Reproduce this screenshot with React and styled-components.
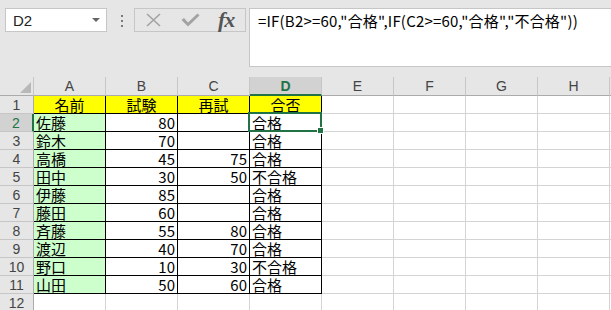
import React from "react";
import styled, { createGlobalStyle, css } from "styled-components";

const GlobalStyle = createGlobalStyle`
  html, body {
    margin: 0;
    padding: 0;
    background: #e6e6e6;
  }
  body {
    font-family: "Noto Sans CJK JP", "Liberation Sans", sans-serif;
  }
`;

const GREEN = "#217346";
const GRID = "#d4d4d4";

const Page = styled.div`
  width: 611px;
  height: 310px;
  overflow: hidden;
  background: #e6e6e6;
`;

const FormulaRow = styled.div`
  display: flex;
  align-items: flex-start;
  height: 77px;
  box-sizing: border-box;
  padding: 8px 0 0 5px;
`;

const NameBox = styled.div`
  width: 102px;
  height: 24px;
  box-sizing: border-box;
  border: 1px solid #c6c6c6;
  background: #fff;
  display: flex;
  align-items: center;
  justify-content: space-between;
  padding: 0 6px 0 7px;
  font: 15px "Liberation Sans", sans-serif;
  color: #222;
`;

const DropArrow = styled.span`
  width: 0;
  height: 0;
  border-left: 4px solid transparent;
  border-right: 4px solid transparent;
  border-top: 4px solid #666;
`;

const Grip = styled.div`
  display: flex;
  flex-direction: column;
  gap: 3px;
  margin: 7px 11px 0 14px;
  span {
    width: 2px;
    height: 2px;
    background: #7a7a7a;
  }
`;

const ButtonBox = styled.div`
  width: 112px;
  height: 24px;
  box-sizing: border-box;
  border: 1px solid #c6c6c6;
  display: flex;
  align-items: center;
  padding-left: 11px;
`;

const IconSlot = styled.span`
  display: flex;
  align-items: center;
  margin-right: ${(p) => p.gap || 0}px;
`;

const Fx = styled.span`
  font: italic bold 22px "Liberation Serif", serif;
  color: #555;
  letter-spacing: -1px;
  line-height: 22px;
  margin-top: -1px;
`;

const FormulaBox = styled.div`
  flex: 1;
  margin-left: 3px;
  height: 59px;
  box-sizing: border-box;
  border: 1px solid #c6c6c6;
  border-right: none;
  background: #fff;
  padding: 2px 0 0 8px;
  font-size: 15px;
  line-height: 20px;
  letter-spacing: 0.2px;
  color: #000;
  white-space: nowrap;
`;

const Sheet = styled.div`
  display: grid;
  grid-template-columns: 34px repeat(8, 72px) 40px;
  grid-template-rows: 19px repeat(12, 18px);
`;

const HeadBase = css`
  box-sizing: border-box;
  background: #e6e6e6;
  display: flex;
  align-items: center;
  justify-content: center;
  font: 14px "Liberation Sans", sans-serif;
  color: #444;
`;

const Corner = styled.div`
  ${HeadBase};
  border-right: 1px solid #c6c6c6;
  border-bottom: 1px solid #ababab;
  justify-content: flex-end;
  align-items: flex-end;
  padding: 0 2px 2px 0;
`;

const ColHead = styled.div`
  ${HeadBase};
  border-right: 1px solid #c6c6c6;
  border-bottom: 1px solid #ababab;
  ${(p) =>
    p.active &&
    css`
      background: #d2d2d2;
      color: ${GREEN};
      font-weight: bold;
      border-bottom: 2px solid ${GREEN};
    `}
`;

const RowHead = styled.div`
  ${HeadBase};
  border-right: 1px solid #ababab;
  border-bottom: 1px solid #c6c6c6;
  ${(p) =>
    p.active &&
    css`
      background: #d2d2d2;
      color: ${GREEN};
      border-right: 2px solid ${GREEN};
    `}
`;

const Cell = styled.div`
  position: relative;
  box-sizing: border-box;
  border-right: 1px solid ${(p) => (p.boxed ? "#000" : GRID)};
  border-bottom: 1px solid ${(p) => (p.boxed ? "#000" : GRID)};
  background: ${(p) => p.fill || "#fff"};
  display: flex;
  align-items: flex-end;
  justify-content: ${(p) =>
    p.align === "right" ? "flex-end" : p.align === "center" ? "center" : "flex-start"};
  padding: 0 2px;
  font-size: 15px;
  line-height: 17px;
  color: #000;
  white-space: nowrap;
`;

const Selection = styled.div`
  position: absolute;
  top: -2px;
  left: -2px;
  right: -1px;
  bottom: -1px;
  border: 2px solid ${GREEN};
  z-index: 2;
  pointer-events: none;
`;

const FillHandle = styled.div`
  position: absolute;
  right: -4px;
  bottom: -4px;
  width: 5px;
  height: 5px;
  background: ${GREEN};
  border: 1px solid #fff;
`;

const columns = ["A", "B", "C", "D", "E", "F", "G", "H", ""];

const header = ["名前", "試験", "再試", "合否"];

const data = [
  ["佐藤", 80, "", "合格"],
  ["鈴木", 70, "", "合格"],
  ["高橋", 45, 75, "合格"],
  ["田中", 30, 50, "不合格"],
  ["伊藤", 85, "", "合格"],
  ["藤田", 60, "", "合格"],
  ["斉藤", 55, 80, "合格"],
  ["渡辺", 40, 70, "合格"],
  ["野口", 10, 30, "不合格"],
  ["山田", 50, 60, "合格"],
];

const formula = '=IF(B2>=60,"合格",IF(C2>=60,"合格","不合格"))';

const CancelIcon = () => (
  <svg width="15" height="14" viewBox="0 0 15 14">
    <path d="M1 1 L14 13 M14 1 L1 13" stroke="#a3a3a3" strokeWidth="1.6" fill="none" />
  </svg>
);

const CheckIcon = () => (
  <svg width="19" height="14" viewBox="0 0 19 14">
    <path d="M0.5 7 L3 5 L7 9.5 L16.5 0.5 L18.5 2.5 L7 13.5 Z" fill="#a3a3a3" />
  </svg>
);

const CornerMark = () => (
  <svg width="11" height="11" viewBox="0 0 11 11">
    <polygon points="11,0 11,11 0,11" fill="#b8b8b8" />
  </svg>
);

const App = () => {
  const rows = [];

  // row 1 : yellow header of the table
  rows.push(
    <React.Fragment key="r1">
      <RowHead>1</RowHead>
      {header.map((h) => (
        <Cell key={h} boxed fill="#ffff00" align="center">
          {h}
        </Cell>
      ))}
      {[0, 1, 2, 3, 4].map((i) => (
        <Cell key={"e" + i} />
      ))}
    </React.Fragment>
  );

  data.forEach((d, idx) => {
    const r = idx + 2;
    rows.push(
      <React.Fragment key={"r" + r}>
        <RowHead active={r === 2}>{r}</RowHead>
        <Cell boxed fill="#ccffcc">
          {d[0]}
        </Cell>
        <Cell boxed align="right">
          {d[1]}
        </Cell>
        <Cell boxed align="right">
          {d[2]}
        </Cell>
        <Cell boxed>
          {d[3]}
          {r === 2 && (
            <Selection>
              <FillHandle />
            </Selection>
          )}
        </Cell>
        {[0, 1, 2, 3, 4].map((i) => (
          <Cell key={"e" + i} />
        ))}
      </React.Fragment>
    );
  });

  rows.push(
    <React.Fragment key="r12">
      <RowHead>12</RowHead>
      {columns.map((c, i) => (
        <Cell key={"x" + i} />
      ))}
    </React.Fragment>
  );

  return (
    <Page>
      <GlobalStyle />
      <FormulaRow>
        <NameBox>
          D2
          <DropArrow />
        </NameBox>
        <Grip>
          <span />
          <span />
          <span />
        </Grip>
        <ButtonBox>
          <IconSlot gap={20}>
            <CancelIcon />
          </IconSlot>
          <IconSlot gap={18}>
            <CheckIcon />
          </IconSlot>
          <Fx>fx</Fx>
        </ButtonBox>
        <FormulaBox>{formula}</FormulaBox>
      </FormulaRow>
      <Sheet>
        <Corner>
          <CornerMark />
        </Corner>
        {columns.map((c, i) => (
          <ColHead key={"h" + i} active={c === "D"}>
            {c}
          </ColHead>
        ))}
        {rows}
      </Sheet>
    </Page>
  );
};

export default App;
